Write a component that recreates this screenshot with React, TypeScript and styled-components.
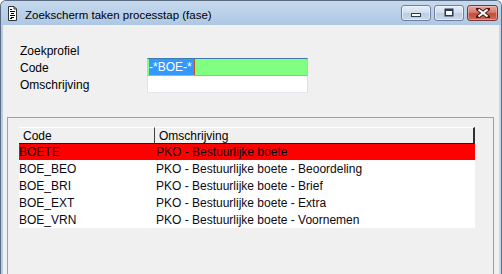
import React from 'react';
import styled, { createGlobalStyle, css } from 'styled-components';

const GlobalStyle = createGlobalStyle`
  html, body {
    margin: 0;
    padding: 0;
    background: #ffffff;
    overflow: hidden;
  }
  * {
    box-sizing: border-box;
  }
`;

const uiFont = `"Liberation Sans", Arial, sans-serif`;

const Window = styled.div`
  width: 502px;
  height: 274px;
  display: flex;
  flex-direction: column;
  border: 1px solid #5b6b82;
  border-bottom: none;
  border-radius: 6px 6px 0 0;
  background: linear-gradient(90deg, #b6cde6, #c3d7ec);
  font-family: ${uiFont};
  color: #000;
  overflow: hidden;
`;

const TitleBar = styled.div`
  height: 24px;
  flex: none;
  display: flex;
  align-items: center;
  padding: 0 3px 0 7px;
  background: linear-gradient(180deg, #c6d9ee 0%, #b9d0e9 55%, #aec7e3 100%);
`;

const TitleText = styled.div`
  margin-left: 8px;
  font-size: 11.5px;
  line-height: 20px;
  padding-top: 4px;
`;

const Caption = styled.div`
  margin-left: auto;
  align-self: flex-start;
  padding-top: 4px;
  display: flex;
  gap: 3px;
`;

const CaptionButton = styled.div<{ $close?: boolean }>`
  width: 30px;
  height: 16px;
  border-radius: 3px;
  display: flex;
  align-items: center;
  justify-content: center;
  border: 1px solid #6d7f9c;
  background: linear-gradient(180deg, #e4ecf7 0%, #d3dfef 45%, #bccde4 55%, #c8d7ea 100%);
  box-shadow: inset 0 0 0 1px rgba(255, 255, 255, 0.55);
  ${({ $close }) => $close && css`
    width: 31px;
    border-color: #7a3a34;
    background: linear-gradient(180deg, #e7a99f 0%, #d77a6c 45%, #c44c3c 55%, #d06b58 100%);
    box-shadow: inset 0 0 0 1px rgba(255, 210, 200, 0.45);
  `}
`;

const Client = styled.div`
  flex: 1;
  margin: 0 2px;
  background: #f0f0f0;
  display: flex;
  flex-direction: column;
`;

const SearchForm = styled.div`
  padding: 16px 0 0 17px;
  display: grid;
  grid-template-columns: 127px 161px;
  grid-template-rows: 17px 17px 17px;
  font-size: 12px;
`;

const Label = styled.div`
  grid-column: 1;
  height: 17px;
  padding-top: 2px;
  line-height: 17px;
`;

const Input = styled.div<{ $focused?: boolean }>`
  grid-column: 2;
  align-self: start;
  height: 18px;
  display: flex;
  align-items: stretch;
  padding: 0 1px;
  border: 1px solid;
  border-color: #abadb3 #dbdfe6 #e3e9ef #e2e3ea;
  background: #ffffff;
  ${({ $focused }) => $focused && css`
    border-color: #3d7bad #a4c9e3 #b7d9ed #b5cfe7;
    background: #80ff80;
  `}
`;

const Selection = styled.span`
  background: #3399ff;
  color: #ffffff;
  line-height: 17px;
  padding: 0 2px 0 0;
`;

const Caret = styled.span`
  width: 1px;
  background: #c8501e;
`;

const GroupBox = styled.div`
  margin: 25px 5px 0 4px;
  height: 200px;
  border: 1px solid #a0a0a0;
  padding: 9px 0 0 11px;
`;

const List = styled.div`
  width: 456px;
  background: #ffffff;
  font-size: 12px;
`;

const Columns = css`
  display: grid;
  grid-template-columns: 136px 320px;
`;

const HeaderRow = styled.div`
  ${Columns}
  height: 16px;
  background: #f0f0f0;
`;

const HeaderCell = styled.div<{ $last?: boolean }>`
  border-top: 1px solid #ffffff;
  border-bottom: 1px solid #1e1e1e;
  border-right: 1px solid #404040;
  padding: 2px 0 0 4px;
  line-height: 13px;
  ${({ $last }) => $last && css`
    border-right: 2px solid #303030;
  `}
`;

const Row = styled.div<{ $selected?: boolean }>`
  ${Columns}
  height: 17px;
  padding-top: 2px;
  line-height: 15px;
  color: #0a0a14;
  ${({ $selected }) => $selected && css`
    background: #ff0000;
  `}
`;

const Cell = styled.div<{ $pad?: number }>`
  padding-left: ${({ $pad }) => $pad ?? 0}px;
  white-space: nowrap;
`;

const DocIcon = () => (
  <svg width="9" height="15" viewBox="0 0 9 15">
    <path d="M0.5 0.5 H6 L8.5 3 V14.5 H0.5 Z" fill="#ffffff" stroke="#333" />
    <path d="M6 0.5 V3 H8.5" fill="none" stroke="#333" />
    <rect x="2" y="3" width="2" height="1" fill="#000" />
    <rect x="2" y="5" width="5" height="1" fill="#000" />
    <rect x="3" y="7" width="3" height="1" fill="#000" />
    <rect x="2" y="9" width="5" height="1" fill="#000" />
    <rect x="3" y="11" width="3" height="1" fill="#000" />
    <rect x="2" y="12" width="2" height="1" fill="#000" />
  </svg>
);

const MinGlyph = () => (
  <svg width="12" height="10" viewBox="0 0 12 10">
    <rect x="1.5" y="5.5" width="9" height="3" fill="#ffffff" stroke="#2b3a55" />
  </svg>
);

const MaxGlyph = () => (
  <svg width="12" height="10" viewBox="0 0 12 10">
    <rect x="1.5" y="0.5" width="9" height="8" fill="#2b3a55" />
    <rect x="3" y="3" width="6" height="4" fill="#ffffff" />
  </svg>
);

const CloseGlyph = () => (
  <svg width="14" height="10" viewBox="0 0 14 10">
    <path d="M2 1 L12 9 M12 1 L2 9" stroke="#4a1c18" strokeWidth="4" strokeLinecap="square" />
    <path d="M2.5 1.5 L11.5 8.5 M11.5 1.5 L2.5 8.5" stroke="#ffffff" strokeWidth="2.2" />
  </svg>
);

const rows = [
  { code: 'BOETE', omschrijving: 'PKO - Bestuurlijke boete' },
  { code: 'BOE_BEO', omschrijving: 'PKO - Bestuurlijke boete - Beoordeling' },
  { code: 'BOE_BRI', omschrijving: 'PKO - Bestuurlijke boete - Brief' },
  { code: 'BOE_EXT', omschrijving: 'PKO - Bestuurlijke boete - Extra' },
  { code: 'BOE_VRN', omschrijving: 'PKO - Bestuurlijke boete - Voornemen' },
];

const App: React.FC = () => {
  const selected = 'BOETE';

  return (
    <>
      <GlobalStyle />
      <Window>
        <TitleBar>
          <DocIcon />
          <TitleText>Zoekscherm taken processtap (fase)</TitleText>
          <Caption>
            <CaptionButton><MinGlyph /></CaptionButton>
            <CaptionButton><MaxGlyph /></CaptionButton>
            <CaptionButton $close><CloseGlyph /></CaptionButton>
          </Caption>
        </TitleBar>
        <Client>
          <SearchForm>
            <Label>Zoekprofiel</Label>
            <div />
            <Label>Code</Label>
            <Input $focused>
              <Selection>-*BOE-*</Selection>
              <Caret />
            </Input>
            <Label>Omschrijving</Label>
            <Input />
          </SearchForm>
          <GroupBox>
            <List>
              <HeaderRow>
                <HeaderCell>Code</HeaderCell>
                <HeaderCell $last>Omschrijving</HeaderCell>
              </HeaderRow>
              {rows.map((r) => (
                <Row key={r.code} $selected={r.code === selected}>
                  <Cell>{r.code}</Cell>
                  <Cell $pad={1}>{r.omschrijving}</Cell>
                </Row>
              ))}
            </List>
          </GroupBox>
        </Client>
      </Window>
    </>
  );
};

export default App;
